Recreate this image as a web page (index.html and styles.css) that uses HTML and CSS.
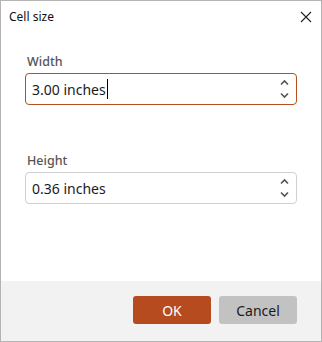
FILE: index.html
```html
<!DOCTYPE html>
<html>
<head>
<meta charset="utf-8">
<link rel="stylesheet" href="styles.css">
</head>
<body>
<div class="dialog">
  <div class="titlebar">
    <span class="title">Cell size</span>
    <svg class="close" width="12" height="12" viewBox="0 0 12 12"><path d="M1 1 L11 11 M11 1 L1 11" stroke="#222" stroke-width="1.1" fill="none"/></svg>
  </div>
  <div class="content">
    <div class="field first">
      <div class="label">Width</div>
      <div class="input focused">
        <span class="value">3.00 inches</span><span class="caret"></span>
        <span class="spin">
          <svg width="9" height="20" viewBox="0 0 9 20"><path d="M1 5.5 L4.5 2 L8 5.5" stroke="#555" stroke-width="1.6" fill="none"/><path d="M1 14.5 L4.5 18 L8 14.5" stroke="#555" stroke-width="1.6" fill="none"/></svg>
        </span>
      </div>
    </div>
    <div class="field second">
      <div class="label">Height</div>
      <div class="input">
        <span class="value">0.36 inches</span>
        <span class="spin">
          <svg width="9" height="20" viewBox="0 0 9 20"><path d="M1 5.5 L4.5 2 L8 5.5" stroke="#555" stroke-width="1.6" fill="none"/><path d="M1 14.5 L4.5 18 L8 14.5" stroke="#555" stroke-width="1.6" fill="none"/></svg>
        </span>
      </div>
    </div>
  </div>
  <div class="footer">
    <button class="btn ok">OK</button>
    <button class="btn cancel">Cancel</button>
  </div>
</div>
</body>
</html>
```
FILE: styles.css
```css
html, body {
  margin: 0;
  padding: 0;
  background: #fff;
}
.dialog {
  width: 322px;
  height: 342px;
  box-sizing: border-box;
  border: 1px solid #b4b4b4;
  display: flex;
  flex-direction: column;
  font-family: "Noto Sans", "Open Sans", sans-serif;
  color: #1a1a1a;
  background: #fff;
}
.titlebar {
  height: 31px;
  display: flex;
  align-items: center;
  justify-content: space-between;
  padding: 0 9px 0 8px;
}
.title {
  font-size: 12px;
  color: #111;
}
.close {
  display: block;
}
.content {
  flex: 1;
  padding: 0 24px;
}
.field.first {
  margin-top: 21px;
}
.field.second {
  margin-top: 47px;
}
.label {
  font-size: 12.5px;
  font-weight: 500;
  color: #555;
  padding-left: 2px;
  height: 20px;
  line-height: 18px;
}
.input {
  height: 32px;
  box-sizing: border-box;
  border: 1px solid #d0d0d0;
  border-radius: 4px;
  display: flex;
  align-items: center;
  padding: 0 7px 0 6px;
  font-size: 14px;
  color: #1a1a1a;
}
.input.focused {
  border-color: #b7501f;
}
.caret {
  display: inline-block;
  width: 1px;
  height: 20px;
  background: #000;
  margin-left: 1px;
}
.spin {
  margin-left: auto;
  display: flex;
}
.spin svg {
  display: block;
}
.footer {
  height: 60px;
  background: #f2f2f2;
  display: flex;
  justify-content: flex-end;
  align-items: flex-start;
  gap: 8px;
  padding: 15px 24px 0 0;
  box-sizing: border-box;
}
.btn {
  width: 78px;
  height: 28px;
  border: none;
  border-radius: 3px;
  font-family: "Noto Sans", "Open Sans", sans-serif;
  font-size: 14px;
  padding: 0;
}
.ok {
  background: #b64b20;
  color: #fff;
}
.cancel {
  background: #c2c2c2;
  color: #1a1a1a;
}
```
